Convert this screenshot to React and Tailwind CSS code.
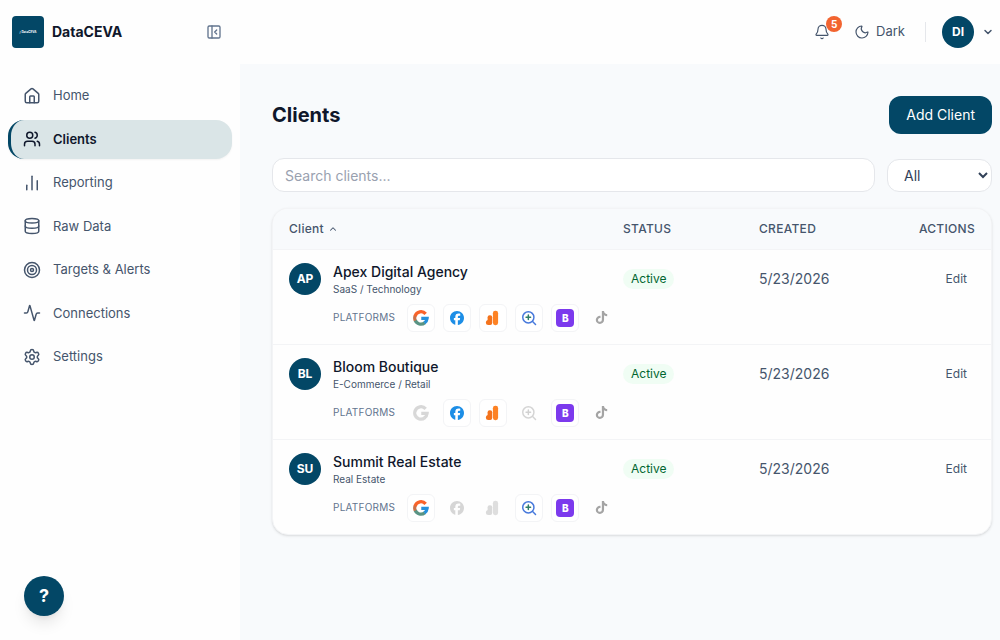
import React, { useState } from 'react';
import {
    Activity,
    Bell,
    ChartNoAxesColumn,
    ChevronDown,
    ChevronUp,
    Database,
    House,
    Moon,
    PanelLeftClose,
    Settings,
    Target,
    Users,
} from 'lucide-react';
import { FaFacebook, FaTiktok } from 'react-icons/fa6';

const NAV_ITEMS = [
    { label: 'Home', icon: House },
    { label: 'Clients', icon: Users },
    { label: 'Reporting', icon: ChartNoAxesColumn },
    { label: 'Raw Data', icon: Database },
    { label: 'Targets & Alerts', icon: Target },
    { label: 'Connections', icon: Activity },
    { label: 'Settings', icon: Settings },
];

const CLIENTS = [
    {
        name: 'Apex Digital Agency',
        industry: 'SaaS / Technology',
        initials: 'AP',
        created: '5/23/2026',
        platforms: ['google', 'facebook', 'analytics', 'search', 'bing'],
    },
    {
        name: 'Bloom Boutique',
        industry: 'E-Commerce / Retail',
        initials: 'BL',
        created: '5/23/2026',
        platforms: ['facebook', 'analytics', 'bing'],
    },
    {
        name: 'Summit Real Estate',
        industry: 'Real Estate',
        initials: 'SU',
        created: '5/23/2026',
        platforms: ['google', 'search', 'bing'],
    },
];

function GoogleIcon() {
    return (
        <svg viewBox="0 0 24 24" className="w-4 h-4" fill="none" strokeWidth="4.8">
            <path d="M3.2 15.2A9.2 9.2 0 0 0 17.8 19" stroke="#5a9484" />
            <path d="M3.6 8A9.2 9.2 0 0 0 3.4 16" stroke="#c9714a" />
            <path d="M19 5.8A9.2 9.2 0 0 0 3.2 9" stroke="#f9632a" />
            <path d="M12.4 12.6H21.2A9.2 9.2 0 0 1 17.2 19.4" stroke="#2490dc" />
        </svg>
    );
}

function AnalyticsIcon() {
    return (
        <svg viewBox="0 0 16 16" className="w-4 h-4">
            <rect x="2.6" y="5.2" width="4.6" height="9.8" rx="2" fill="#f4731c" />
            <circle cx="3.4" cy="12.6" r="2.5" fill="#f4731c" />
            <rect x="7.9" y="0.8" width="5.2" height="14.4" rx="2.4" fill="#fd8224" />
        </svg>
    );
}

function SearchConsoleIcon() {
    return (
        <svg viewBox="0 0 24 24" className="w-4 h-4" fill="none" strokeWidth="2.2" strokeLinecap="round">
            <circle cx="11" cy="11" r="8.4" stroke="#4779dc" />
            <path d="M17.4 17.4L21.8 21.8" stroke="#4779dc" />
            <path d="M11 7.6V14.4M7.6 11H14.4" stroke="#2f7d68" />
        </svg>
    );
}

function BingIcon() {
    return (
        <span className="flex items-center justify-center w-[18px] h-[18px] rounded-sm bg-[#7c3aed] text-white text-[10px] font-extrabold leading-none">
            B
        </span>
    );
}

const PLATFORMS = [
    { id: 'google', label: 'Google Ads', icon: <GoogleIcon /> },
    { id: 'facebook', label: 'Facebook', icon: <FaFacebook className="w-[14px] h-[14px] text-[#1d8ee6]" /> },
    { id: 'analytics', label: 'Google Analytics', icon: <AnalyticsIcon /> },
    { id: 'search', label: 'Search Console', icon: <SearchConsoleIcon /> },
    { id: 'bing', label: 'Bing', icon: <BingIcon /> },
    { id: 'tiktok', label: 'TikTok', icon: <FaTiktok className="w-[13px] h-[13px] text-black" /> },
];

function PlatformBadge({ platform, connected }) {
    if (connected) {
        return (
            <span
                title={platform.label}
                className="flex items-center justify-center w-7 h-7 rounded-md border border-gray-100 bg-white"
            >
                {platform.icon}
            </span>
        );
    }

    return (
        <span
            title={platform.label}
            className={`flex items-center justify-center w-7 h-7 grayscale ${platform.id === 'tiktok' ? 'opacity-35' : 'opacity-30'}`}
        >
            {platform.icon}
        </span>
    );
}

function Avatar({ initials }) {
    return (
        <span className="flex items-center justify-center shrink-0 w-8 h-8 rounded-full bg-[#034766] text-white text-xs font-bold">
            {initials}
        </span>
    );
}

function Sidebar({ active, onSelect }) {
    return (
        <aside className="relative flex flex-col shrink-0 w-60 bg-[#fefefe]">
            <div className="flex items-center gap-2 h-16 pl-3 pr-[18px]">
                <div className="flex items-center justify-center w-8 h-8 rounded-sm bg-[#034766]">
                    <span className="text-[3px] font-bold text-white">/ DataCEVA</span>
                </div>
                <span className="text-sm font-bold text-slate-900">DataCEVA</span>
                <button type="button" aria-label="Collapse sidebar" className="ml-auto text-slate-500">
                    <PanelLeftClose className="w-4 h-4" strokeWidth={2} />
                </button>
            </div>

            <nav className="flex flex-col gap-1 px-2 pt-3">
                {NAV_ITEMS.map(({ label, icon: Icon }) => (
                    <a
                        key={label}
                        href="#"
                        onClick={() => onSelect(label)}
                        className={`flex items-center gap-3 py-2.5 pr-3 rounded-2xl text-[13px] leading-normal
              ${active === label
                                ? 'pl-3 border-l-3 border-[#034766] bg-[#dae5e7] text-slate-900 font-semibold shadow-xs'
                                : 'pl-[15px] text-slate-600'}
            `}
                    >
                        <Icon className="w-[18px] h-[18px]" strokeWidth={2} />
                        {label}
                    </a>
                ))}
            </nav>

            {/* Floating help button */}
            <button
                type="button"
                aria-label="Help"
                className="absolute bottom-6 left-6 w-10 h-10 rounded-full bg-[#034766] text-white text-lg font-bold shadow-lg shadow-black/10"
            >
                ?
            </button>
        </aside>
    );
}

function Topbar() {
    return (
        <header className="flex items-center justify-end h-16 pr-1.5 bg-[#fefefe]">
            <button type="button" aria-label="Notifications" className="relative text-slate-600">
                <Bell className="w-4 h-4" strokeWidth={1.75} />
                <span className="absolute -top-2 left-3 flex items-center justify-center w-4 h-4 rounded-full bg-[#f26430] text-white text-[10px] font-bold">
                    5
                </span>
            </button>
            <button type="button" className="flex items-center gap-1.5 ml-6 text-[13px] leading-normal text-slate-600">
                <Moon className="w-4 h-4" strokeWidth={1.75} />
                Dark
            </button>
            <span className="w-px h-5 ml-5 mr-4 bg-gray-200"></span>
            <button type="button" aria-label="Account menu" className="flex items-center gap-2 text-slate-600">
                <Avatar initials="DI" />
                <ChevronDown className="w-3 h-3" strokeWidth={3} />
            </button>
        </header>
    );
}

function ClientRow({ client }) {
    return (
        <tr className="border-t border-gray-100 align-top">
            <td className="py-3 pl-4">
                <div className="flex items-center gap-3">
                    <Avatar initials={client.initials} />
                    <div>
                        <div className="text-sm font-medium text-slate-900">{client.name}</div>
                        <div className="text-[10px] leading-[14px] text-slate-600">{client.industry}</div>
                    </div>
                </div>
                <div className="flex items-center gap-3 mt-2 pl-11">
                    <span className="text-[10px] tracking-wide text-slate-500">PLATFORMS</span>
                    <div className="flex gap-2">
                        {PLATFORMS.map((platform) => (
                            <PlatformBadge
                                key={platform.id}
                                platform={platform}
                                connected={client.platforms.includes(platform.id)}
                            />
                        ))}
                    </div>
                </div>
            </td>
            <td className="pt-[19px] text-xs leading-5">
                <span className="inline-block px-2 rounded-full bg-green-50 text-green-800">
                    Active
                </span>
            </td>
            <td className="pt-[19px] text-sm text-slate-600">{client.created}</td>
            <td className="pt-[19px] pr-4 text-right text-xs leading-5 text-slate-600">
                <button type="button" className="px-2">Edit</button>
            </td>
        </tr>
    );
}

function App() {
    const [active, setActive] = useState('Clients');
    const [query, setQuery] = useState('');
    const visible = CLIENTS.filter((c) => c.name.toLowerCase().includes(query.toLowerCase()));

    return (
        <div className="flex min-h-screen bg-[#f8fafc] font-['Inter',sans-serif]">
            <Sidebar active={active} onSelect={setActive} />
            <div className="flex-1 min-w-0">
                <Topbar />
                <main className="pt-8 pl-8 pr-2">
                    <div className="flex items-center justify-between">
                        <h1 className="text-xl font-bold text-slate-900">Clients</h1>
                        <button
                            type="button"
                            className="h-[38px] px-[17px] rounded-xl bg-[#034766] text-white text-sm"
                        >
                            Add Client
                        </button>
                    </div>

                    {/* Filters */}
                    <div className="flex items-end gap-3 mt-6">
                        <input
                            type="text"
                            aria-label="Search clients"
                            placeholder="Search clients..."
                            value={query}
                            onChange={(e) => setQuery(e.target.value)}
                            className="flex-1 min-w-0 h-[34px] px-3 rounded-xl border border-gray-200 bg-white text-sm text-slate-700 placeholder:text-gray-400"
                        />
                        <select
                            aria-label="Status"
                            className="w-[105px] h-[33px] px-3 rounded-xl border border-gray-200 bg-white text-sm text-slate-700"
                        >
                            <option>All</option>
                            <option>Active</option>
                            <option>Inactive</option>
                        </select>
                    </div>

                    <div className="mt-4 overflow-hidden rounded-2xl border border-gray-100 bg-[#fefefe] shadow-sm">
                        <table className="w-full table-fixed">
                            <thead className="bg-[#f8fafc] text-xs font-medium text-slate-600">
                                <tr className="h-10">
                                    <th className="pl-4 text-left font-medium">
                                        <button type="button" className="flex items-center gap-1 tracking-wide">
                                            Client
                                            <ChevronUp className="w-2.5 h-2.5" strokeWidth={2.5} />
                                        </button>
                                    </th>
                                    <th className="w-34 text-left font-medium tracking-wide">STATUS</th>
                                    <th className="w-34 text-left font-medium tracking-wide">CREATED</th>
                                    <th className="w-24 pr-4 text-right font-medium tracking-wide">ACTIONS</th>
                                </tr>
                            </thead>
                            <tbody>
                                {visible.map((client) => (
                                    <ClientRow key={client.name} client={client} />
                                ))}
                            </tbody>
                        </table>
                    </div>
                </main>
            </div>
        </div>
    );
}

export default App;
